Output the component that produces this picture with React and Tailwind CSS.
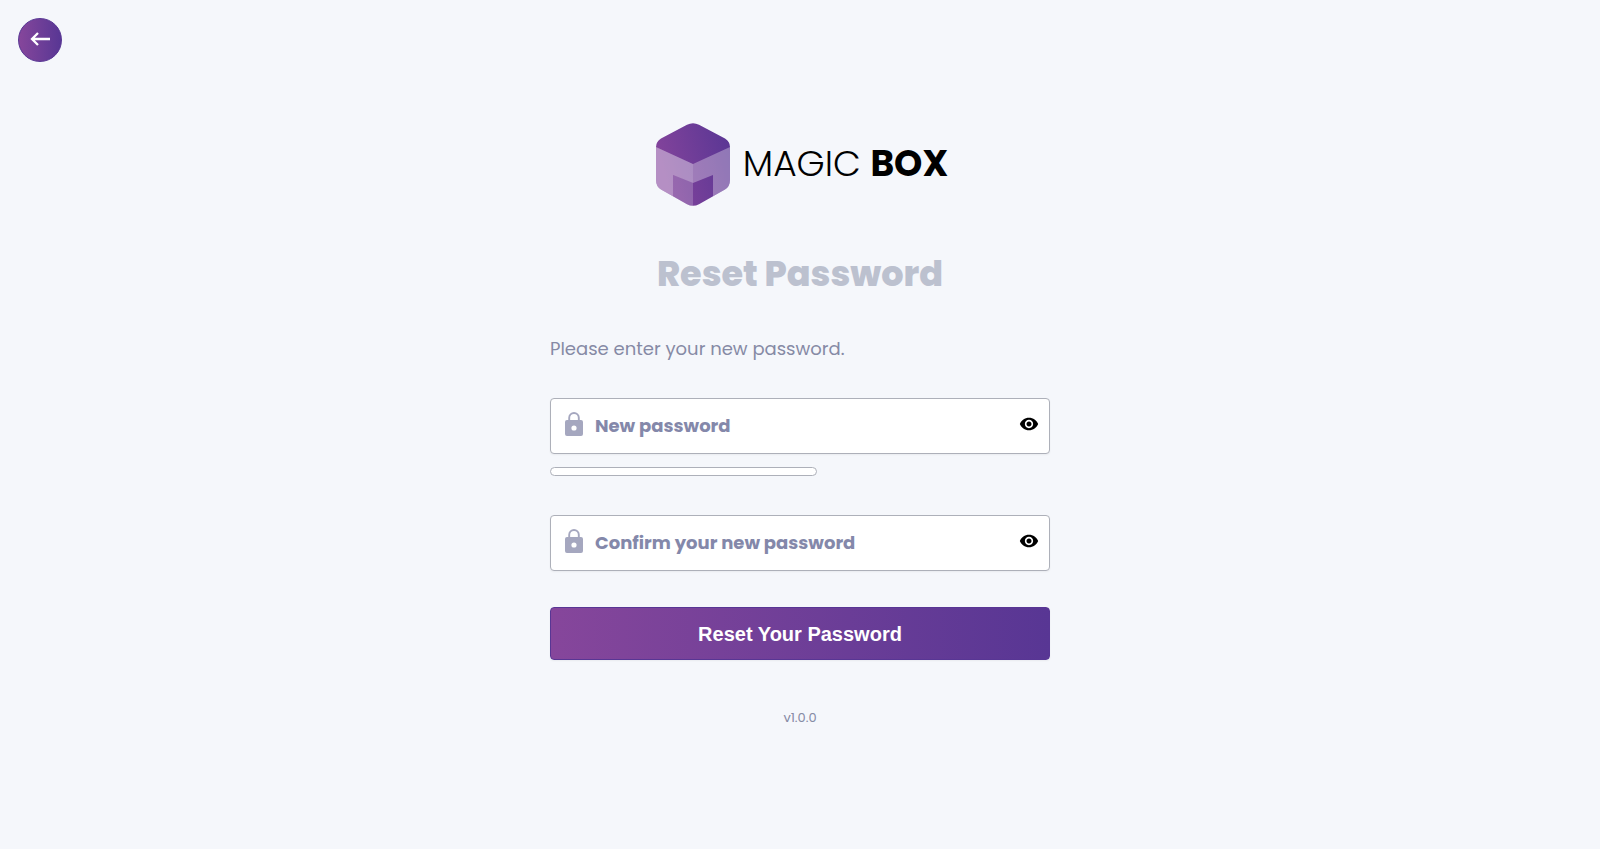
import { useState } from 'react';
import { MdVisibility, MdVisibilityOff } from 'react-icons/md';

function BoxLogo() {
  return (
    <svg viewBox="0 0 74 83" className="h-[83px] w-[74px]" aria-hidden="true">
      <defs>
        <linearGradient id="box-fill" x1="0" y1="0.3" x2="1" y2="0">
          <stop offset="0" stopColor="#82439b" />
          <stop offset="1" stopColor="#583694" />
        </linearGradient>
        <clipPath id="box-outline">
          <path d="M31 1.8Q37-1.4 43 1.8L69 15.5Q74 18.5 74 24V57Q74 63.5 69 66.5L43 81.2Q37 84.4 31 81.2L5 66.5Q0 63.5 0 57V24Q0 18.5 5 15.5Z" />
        </clipPath>
      </defs>
      <g clipPath="url(#box-outline)">
        <rect width="74" height="83" fill="url(#box-fill)" />
        <path d="M0 24L37 41V60L17 52V83H0Z" fill="#fff" fillOpacity="0.38" />
        <path d="M74 24L37 41V60L57 52V83H74Z" fill="#fff" fillOpacity="0.32" />
        <path d="M17 52L37 60V83H17Z" fill="#fff" fillOpacity="0.16" />
        <path d="M0 24L37 41V83H0Z" fill="#fff" fillOpacity="0.05" />
      </g>
    </svg>
  );
}

function LockIcon() {
  return (
    <svg viewBox="0 0 18 24" className="h-6 w-[18px] shrink-0 text-[#a5a7bf]" aria-hidden="true">
      <path d="M4.2 9V5.8a4.8 4.8 0 0 1 9.6 0V9" fill="none" stroke="currentColor" strokeWidth="1.9" />
      <path
        fillRule="evenodd"
        fill="currentColor"
        d="M2 8h14a2 2 0 0 1 2 2v12a2 2 0 0 1-2 2H2a2 2 0 0 1-2-2V10a2 2 0 0 1 2-2Zm7 5.4a2.6 2.6 0 1 0 0 5.2 2.6 2.6 0 0 0 0-5.2Z"
      />
    </svg>
  );
}

function PasswordField({ id, label, value, onChange }) {
  const [visible, setVisible] = useState(false);
  const Eye = visible ? MdVisibilityOff : MdVisibility;

  return (
    <div className="flex h-14 w-full items-center rounded border border-[#adb0b9] bg-white pr-[10px] pl-[14px] shadow-xs">
      <label htmlFor={id} aria-label={label} className="pb-1">
        <LockIcon />
      </label>
      <input
        id={id}
        type={visible ? 'text' : 'password'}
        placeholder={label}
        value={value}
        onChange={(e) => onChange(e.target.value)}
        className="min-w-0 flex-1 bg-transparent px-3 text-lg font-bold text-[#8488aa] outline-none placeholder:text-[#8488aa]"
      />
      <button
        type="button"
        onClick={() => setVisible(!visible)}
        aria-label={visible ? 'Hide password' : 'Show password'}
        className="pb-1 text-black"
      >
        <Eye size={20} />
      </button>
    </div>
  );
}

export default function App() {
  const [password, setPassword] = useState('');
  const [confirm, setConfirm] = useState('');

  const strength = Math.min(password.length * 10, 100);

  return (
    <div className="flex min-h-screen flex-col bg-[#f5f7fb] font-['Poppins','Inter',sans-serif]">
      {/* Back */}
      <header className="px-[18px] pt-[18px]">
        <button
          type="button"
          aria-label="Go back"
          className="flex size-11 items-center justify-center rounded-full border border-[#583694] bg-linear-to-r from-[#86469b] to-[#583694] text-white"
        >
          <svg viewBox="0 0 20 14" className="mb-0.5 h-[14px] w-5" fill="none" stroke="currentColor" strokeWidth="2.3" aria-hidden="true">
            <path d="M20 7H2M8 1L2 7l6 6" />
          </svg>
        </button>
      </header>

      <main className="mx-auto flex w-full max-w-[500px] flex-1 flex-col items-center pt-[61px] pb-12">
        {/* Logo */}
        <div className="flex items-center gap-[13px] pl-1">
          <BoxLogo />
          <p className="pb-px text-[36px] leading-10 whitespace-nowrap text-black">
            <span className="font-light">MAGIC</span> <span className="font-bold">BOX</span>
          </p>
        </div>

        <h1 className="mt-11 text-[35px] leading-12 font-extrabold text-[#bcc1cf]">Reset Password</h1>

        <form className="mt-[37px] w-full" onSubmit={(e) => e.preventDefault()}>
          <p className="text-lg leading-7 text-[#868aa5]">Please enter your new password.</p>

          <div className="mt-[35px]">
            <PasswordField id="new-password" label="New password" value={password} onChange={setPassword} />
          </div>

          {/* Strength meter */}
          <div className="mt-[13px] h-[9px] w-[267px] overflow-hidden rounded-full border border-[#adb0b9] bg-white">
            <div className="h-full bg-[#86469b]" style={{ width: `${strength}%` }}></div>
          </div>

          <div className="mt-[39px]">
            <PasswordField id="confirm-password" label="Confirm your new password" value={confirm} onChange={setConfirm} />
          </div>

          <button
            type="submit"
            className="mt-9 h-[53px] w-full rounded border border-[#583694] bg-linear-to-r from-[#86469b] to-[#583694] font-['Liberation_Sans',Arial,sans-serif] text-xl font-bold text-white shadow-xs"
          >
            Reset Your Password
          </button>
        </form>

        <p className="mt-12 text-[13px] leading-5 text-[#868aa5]">v1.0.0</p>
      </main>
    </div>
  );
}
